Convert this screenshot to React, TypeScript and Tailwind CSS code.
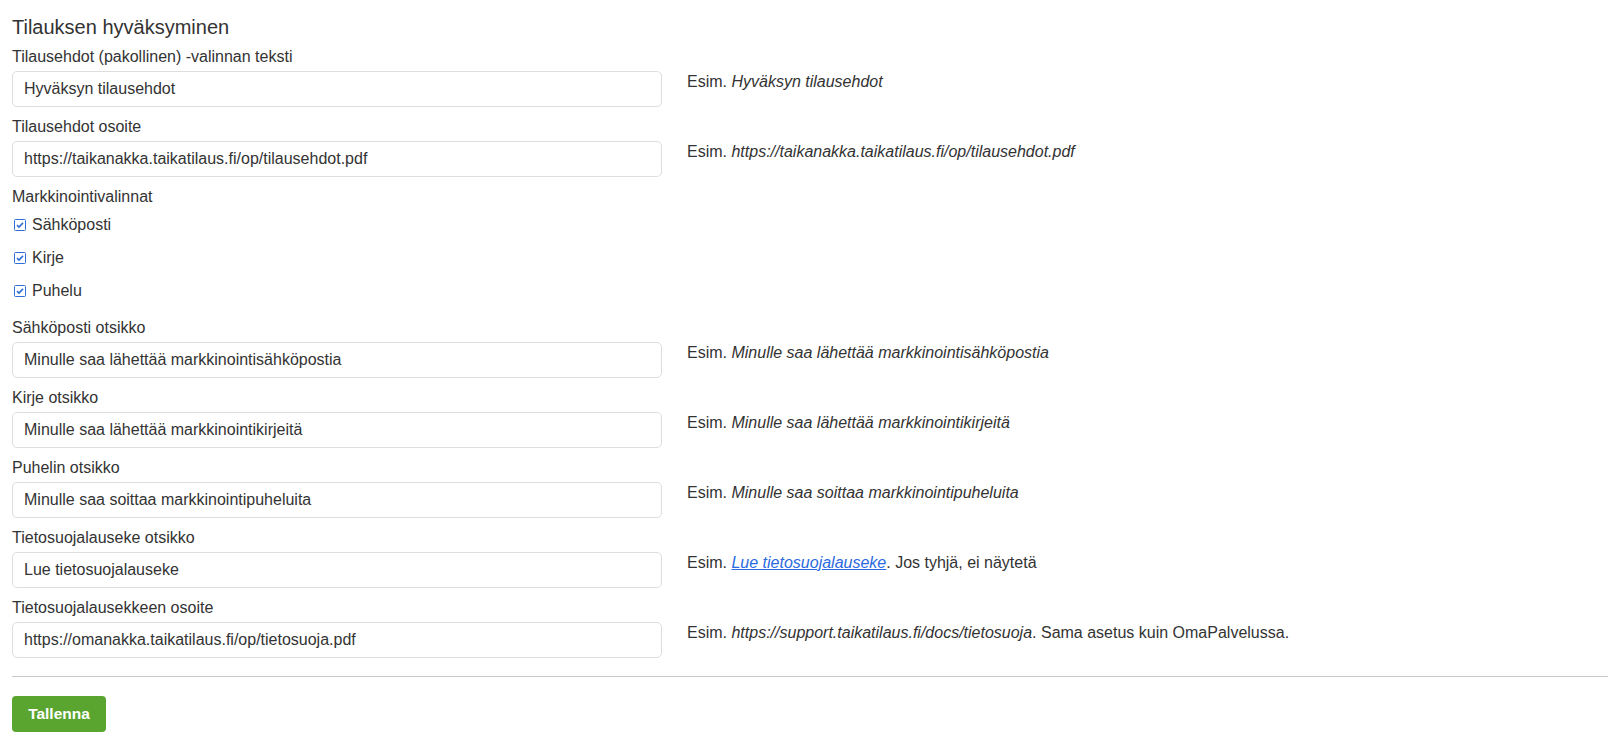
import type { ReactNode } from 'react'

type Field = { label: string; value: string; hint: ReactNode }

const topFields: Field[] = [
  {
    label: 'Tilausehdot (pakollinen) -valinnan teksti',
    value: 'Hyväksyn tilausehdot',
    hint: <><span>Esim. </span><i>Hyväksyn tilausehdot</i></>,
  },
  {
    label: 'Tilausehdot osoite',
    value: 'https://taikanakka.taikatilaus.fi/op/tilausehdot.pdf',
    hint: <><span>Esim. </span><i>https://taikanakka.taikatilaus.fi/op/tilausehdot.pdf</i></>,
  },
]

const bottomFields: Field[] = [
  {
    label: 'Sähköposti otsikko',
    value: 'Minulle saa lähettää markkinointisähköpostia',
    hint: <><span>Esim. </span><i>Minulle saa lähettää markkinointisähköpostia</i></>,
  },
  {
    label: 'Kirje otsikko',
    value: 'Minulle saa lähettää markkinointikirjeitä',
    hint: <><span>Esim. </span><i>Minulle saa lähettää markkinointikirjeitä</i></>,
  },
  {
    label: 'Puhelin otsikko',
    value: 'Minulle saa soittaa markkinointipuheluita',
    hint: <><span>Esim. </span><i>Minulle saa soittaa markkinointipuheluita</i></>,
  },
  {
    label: 'Tietosuojalauseke otsikko',
    value: 'Lue tietosuojalauseke',
    hint: (
      <>
        <span>Esim. </span>
        <a href="#" className="italic text-[#2a6ae0] underline">Lue tietosuojalauseke</a>
        <span>. Jos tyhjä, ei näytetä</span>
      </>
    ),
  },
  {
    label: 'Tietosuojalausekkeen osoite',
    value: 'https://omanakka.taikatilaus.fi/op/tietosuoja.pdf',
    hint: (
      <>
        <span>Esim. </span>
        <i>https://support.taikatilaus.fi/docs/tietosuoja</i>
        <span>. Sama asetus kuin OmaPalvelussa.</span>
      </>
    ),
  },
]

const marketing = ['Sähköposti', 'Kirje', 'Puhelu']

function TextField({ f }: { f: Field }) {
  return (
    <div className="mb-[9px]">
      <label className="block h-[22px] leading-[22px] mb-[3px]">{f.label}</label>
      <div className="flex items-start">
        <input
          readOnly
          value={f.value}
          className="h-9 w-[650px] shrink-0 rounded-[5px] border border-[#dedede] bg-white px-[11px] text-[16px] text-[#333] outline-none"
        />
        <div className="ml-[25px] leading-[22px] text-[#333]">{f.hint}</div>
      </div>
    </div>
  )
}

function CheckIcon() {
  return (
    <svg width="12" height="12" viewBox="0 0 12 12" className="shrink-0">
      <rect x="0.5" y="0.5" width="11" height="11" rx="1" fill="#fff" stroke="#2f6fd8" />
      <path d="M3 6.2 L5 8.1 L9 3.9" fill="none" stroke="#2f6fd8" strokeWidth="1.6" />
    </svg>
  )
}

export default function App() {
  return (
    <div className="min-h-screen bg-white px-3 pt-4 font-['Liberation_Sans',Arial,sans-serif] text-[16px] text-[#333]">
      <h3 className="mb-2 text-[20px] leading-[22px]">Tilauksen hyväksyminen</h3>

      {topFields.map(f => (
        <TextField key={f.label} f={f} />
      ))}

      <div className="mb-[10px]">
        <label className="block h-[22px] leading-[22px]">Markkinointivalinnat</label>
        {marketing.map(m => (
          <div key={m} className="flex h-[33px] items-center pl-[2px]">
            <CheckIcon />
            <span className="ml-[6px]">{m}</span>
          </div>
        ))}
      </div>

      {bottomFields.map(f => (
        <TextField key={f.label} f={f} />
      ))}

      <hr className="mt-[18px] border-t border-[#c8c8c8]" />

      <button className="mt-[19px] h-9 w-[94px] rounded-[4px] bg-[#5aa52f] text-[15.5px] font-bold text-white">
        Tallenna
      </button>
    </div>
  )
}
